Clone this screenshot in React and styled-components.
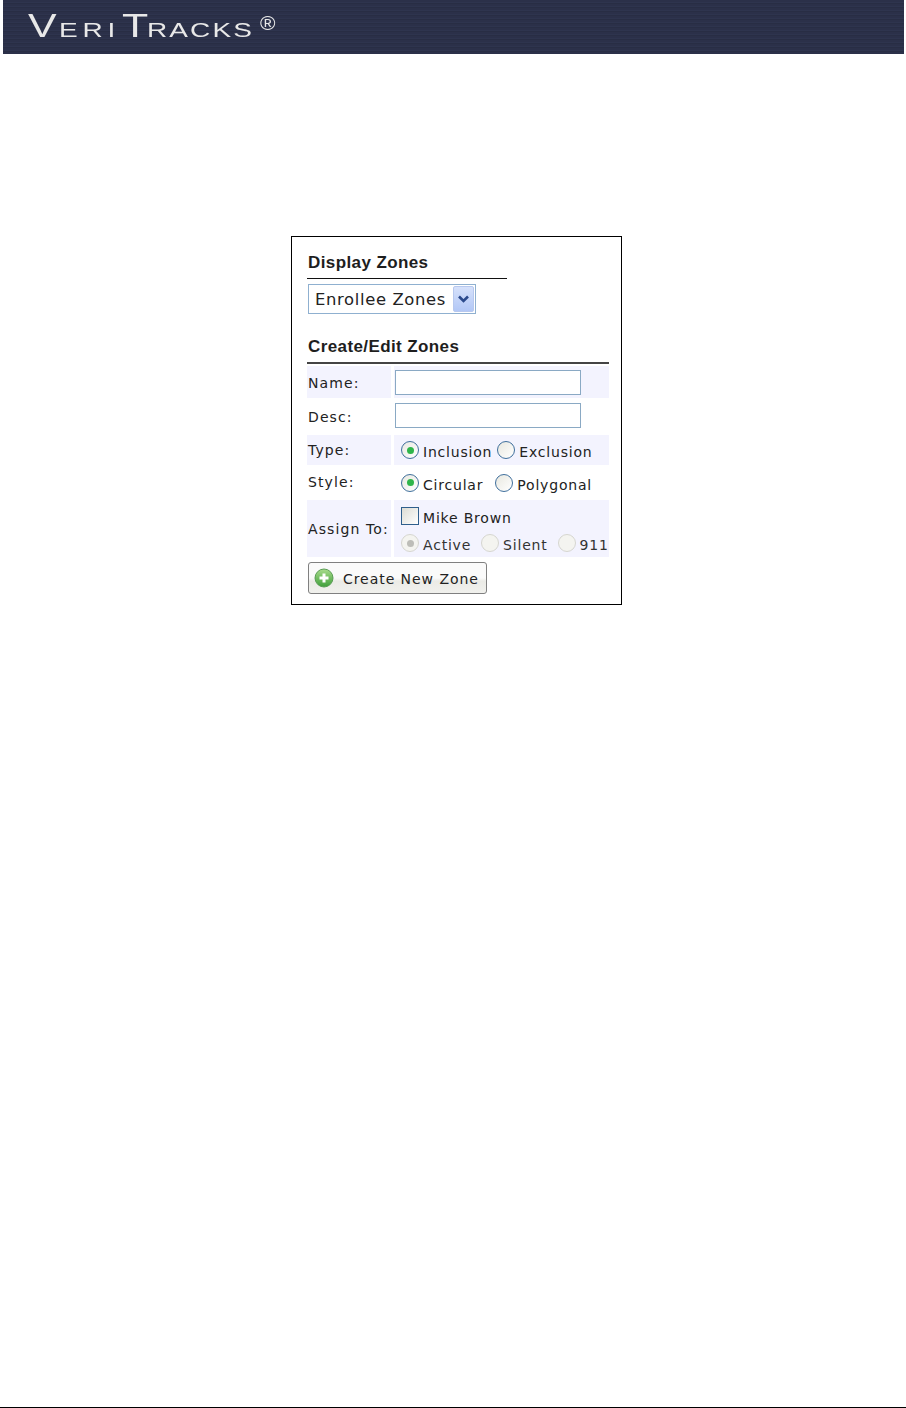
import React from "react";
import styled, { createGlobalStyle } from "styled-components";

const Global = createGlobalStyle`
  html, body { margin: 0; padding: 0; background: #fff; }
  body { font-family: "DejaVu Sans", Verdana, sans-serif; color: #222; }
`;
const Page = styled.div`
  height: 1408px;
  display: flex;
  flex-direction: column;
  overflow: hidden;
`;
const Banner = styled.header`
  height: 54px;
  margin: 0 2px 0 3px;
  padding-left: 25px;
  display: flex;
  align-items: flex-start;
  background: repeating-linear-gradient(180deg, #2b3049 0 2px, #2e344e 2px 3px, #282d44 3px 4px);
`;
const Logo = styled.div`
  display: flex;
  align-items: baseline;
  height: 54px;
  padding-top: 11px;
  box-sizing: border-box;
  font-family: "Liberation Sans", Arial, sans-serif;
  color: #e8e8e8;
  line-height: 30px;
  filter: blur(0.4px);
`;
const LogoCap = styled.span`
  font-size: 33px;
  transform: scaleX(1.3);
  transform-origin: left;
  width: ${(p) => p.$w}px;
  display: inline-block;
`;
const LogoSmall = styled.span`
  font-size: 20px;
  letter-spacing: ${(p) => p.$ls}px;
  transform: scaleX(1.4);
  transform-origin: left;
  display: inline-block;
  width: ${(p) => p.$w}px;
`;
const LogoReg = styled.span`
  font-size: 21px;
  line-height: 0;
  margin-left: 3px;
  align-self: flex-start;
  position: relative;
  top: 12px;
`;
const Panel = styled.section`
  box-sizing: border-box;
  width: 331px;
  height: 369px;
  margin: 182px 0 0 291px;
  padding: 13px 12px 0 15px;
  border: 1px solid #000;
`;
const Heading = styled.h3`
  margin: 0;
  font: 700 17px/24px "Liberation Sans", Arial, sans-serif;
  letter-spacing: 0.4px;
  color: #1e1e1e;
  padding: ${(p) => p.$pt}px 0 2px 1px;
  border-bottom: ${(p) => (p.$strong ? "2px solid #444" : "1.5px solid #111")};
  width: ${(p) => p.$w}px;
  box-sizing: border-box;
  height: ${(p) => p.$h}px;
`;
const SelectBox = styled.div`
  box-sizing: border-box;
  width: 168px;
  height: 30px;
  margin: 5px 0 0 1px;
  padding: 1px 1px 1px 6px;
  display: flex;
  align-items: center;
  justify-content: space-between;
  background: #fff;
  border: 1px solid #8fb0d0;
  font-size: 16.4px;
  letter-spacing: 0.65px;
  color: #222;
`;
const SelectArrow = styled.span`
  width: 21px;
  height: 26px;
  display: flex;
  align-items: center;
  justify-content: center;
  border-radius: 2px;
  border: 1px solid #b7c8ef;
  background: linear-gradient(180deg, #d6e1fb, #b2c7f6);
  box-sizing: border-box;
`;
const Spacer = styled.div`
  height: 19px;
`;
const Form = styled.div`
  display: grid;
  grid-template-columns: 84px 215px;
  column-gap: 3px;
  margin-top: 2px;
  width: 302px;
`;
const Label = styled.div`
  background: ${(p) => (p.$tint ? "#f3f3fe" : "transparent")};
  height: ${(p) => p.$h}px;
  margin-bottom: ${(p) => p.$mb || 0}px;
  font-size: 14px;
  letter-spacing: 1.1px;
  padding-left: 1px;
  box-sizing: border-box;
  display: flex;
  align-items: center;
  padding-top: ${(p) => p.$pt || 0}px;
  padding-bottom: ${(p) => p.$pb || 0}px;
  white-space: nowrap;
`;
const Value = styled.div`
  background: ${(p) => (p.$tint ? "#f3f3fe" : "transparent")};
  height: ${(p) => p.$h}px;
  margin-bottom: ${(p) => p.$mb || 0}px;
  box-sizing: border-box;
  padding-left: ${(p) => p.$pl ?? 1}px;
  display: flex;
  flex-direction: ${(p) => (p.$col ? "column" : "row")};
  align-items: ${(p) => (p.$col ? "flex-start" : "center")};
  font-size: 14px;
  letter-spacing: 0.8px;
`;
const TextInput = styled.div`
  box-sizing: border-box;
  width: 186px;
  height: 25px;
  background: #fff;
  border: 1px solid #8aa9c4;
`;
const Choice = styled.span`
  display: inline-flex;
  align-items: center;
  gap: 4px;
  margin-right: ${(p) => p.$mr || 0}px;
  color: ${(p) => (p.$muted ? "#333" : "#222")};
  white-space: nowrap;
`;
const ChoiceText = styled.span`
  padding-top: 4px;
`;
const Dot = styled.span`
  box-sizing: border-box;
  width: 18px;
  height: 18px;
  border-radius: 50%;
  display: flex;
  align-items: center;
  justify-content: center;
  border: 1.5px solid ${(p) => (p.$disabled ? "#d6d6d0" : "#3f6f9c")};
  background: ${(p) => (p.$disabled ? "#f4f4f0" : "linear-gradient(135deg, #e8e8e0, #fff)")};
  &::after {
    content: "";
    display: ${(p) => (p.$on ? "block" : "none")};
    width: 7px;
    height: 7px;
    border-radius: 50%;
    background: ${(p) => (p.$disabled ? "#bdbdb8" : "#2fb54a")};
  }
`;
const Check = styled.span`
  box-sizing: border-box;
  width: 18px;
  height: 18px;
  border: 1.5px solid #2f5f8c;
  background: linear-gradient(135deg, #dcdcd4, #fff);
`;
const ChoiceRow = styled.div`
  display: flex;
  align-items: center;
  height: ${(p) => p.$h}px;
`;
const Button = styled.button`
  box-sizing: border-box;
  width: 179px;
  height: 32px;
  margin: 5px 0 0 1px;
  padding: 0 0 0 5px;
  display: flex;
  align-items: center;
  gap: 9px;
  border: 1px solid #808080;
  border-radius: 3px;
  background: linear-gradient(180deg, #fafafa 0 50%, #ebebe6 60%, #f1f1ed 100%);
  font-family: "DejaVu Sans", Verdana, sans-serif;
  font-size: 14px;
  letter-spacing: 0.95px;
  color: #222;
`;
const ButtonText = styled.span`
  padding-top: 2px;
`;
const Rule = styled.div`
  margin-top: auto;
  height: 1px;
  background: #000;
`;

const Radio = ({ on, disabled, children, mr }) => (
  <Choice $mr={mr} $muted={disabled}>
    <Dot $on={on} $disabled={disabled} />
    <ChoiceText>{children}</ChoiceText>
  </Choice>
);

export default function App() {
  return (
    <Page>
      <Global />
      <Banner>
        <Logo>
          <LogoCap $w={31}>V</LogoCap>
          <LogoSmall $w={63} $ls={3.4}>ERI</LogoSmall>
          <LogoCap $w={25}>T</LogoCap>
          <LogoSmall $w={110} $ls={1.5}>RACKS</LogoSmall>
          <LogoReg>®</LogoReg>
        </Logo>
      </Banner>
      <Panel>
        <Heading $w={200} $h={29} $pt={1}>Display Zones</Heading>
        <SelectBox>
          Enrollee Zones
          <SelectArrow>
            <svg width="13" height="10" viewBox="0 0 13 10">
              <path d="M2 2.5l4.5 4.5 4.5-4.5" fill="none" stroke="#2b4a8c" strokeWidth="2.6" />
            </svg>
          </SelectArrow>
        </SelectBox>
        <Spacer />
        <Heading $w={302} $h={31} $pt={2} $strong>Create/Edit Zones</Heading>
        <Form>
          <Label $tint $h={32} $mb={4} $pt={2}>Name:</Label>
          <Value $tint $h={32} $mb={4}><TextInput /></Value>
          <Label $h={29} $mb={4}>Desc:</Label>
          <Value $h={27} $mb={6}><TextInput /></Value>
          <Label $tint $h={30} $mb={3}>Type:</Label>
          <Value $tint $h={30} $mb={3} $pl={7}>
            <Radio on mr={5}>Inclusion</Radio>
            <Radio>Exclusion</Radio>
          </Value>
          <Label $h={29} $mb={3} $pb={2}>Style:</Label>
          <Value $h={29} $mb={3} $pl={7}>
            <Radio on mr={12}>Circular</Radio>
            <Radio>Polygonal</Radio>
          </Value>
          <Label $tint $h={57}>Assign To:</Label>
          <Value $tint $h={57} $col $pl={7}>
            <ChoiceRow $h={31}>
              <Choice><Check /><ChoiceText>Mike Brown</ChoiceText></Choice>
            </ChoiceRow>
            <ChoiceRow $h={24}>
              <Radio on disabled mr={10}>Active</Radio>
              <Radio disabled mr={10}>Silent</Radio>
              <Radio disabled>911</Radio>
            </ChoiceRow>
          </Value>
        </Form>
        <Button type="button">
          <svg width="20" height="20" viewBox="0 0 20 20">
            <defs>
              <linearGradient id="g" x1="0" y1="0" x2="0" y2="1">
                <stop offset="0" stopColor="#a9dc8c" />
                <stop offset="1" stopColor="#3f9f3a" />
              </linearGradient>
            </defs>
            <circle cx="10" cy="10" r="9" fill="url(#g)" stroke="#5a9d55" />
            <path d="M10 5.5v9M5.5 10h9" stroke="#fff" strokeWidth="3" />
          </svg>
          <ButtonText>Create New Zone</ButtonText>
        </Button>
      </Panel>
      <Rule />
    </Page>
  );
}
